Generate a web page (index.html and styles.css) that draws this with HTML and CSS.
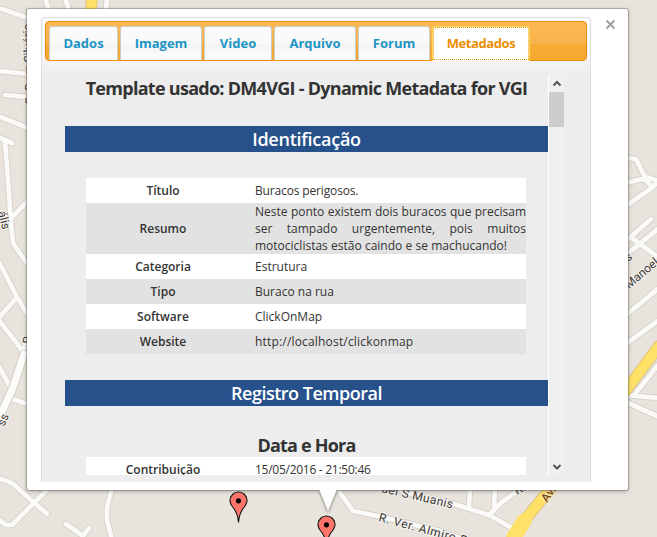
FILE: index.html
```html
<!DOCTYPE html>
<html lang="pt-BR">
<head>
<meta charset="utf-8">
<title>ClickOnMap</title>
<link rel="stylesheet" href="styles.css">
</head>
<body>
<svg class="map" width="657" height="537" viewBox="0 0 657 537">
  <defs>
    <g id="roads">
      <path d="M2 9L28 18M45-2L49 10M65-2L69 10M107-2L106 10M-2 71L28 74M5 95L28 97M-2 116L28 128M-2 137L12 143M5 141L8 180L11 223L13 243L28 265M11 218L28 201M-2 260L17 297L28 315M17 297L-2 319L22 350L22 362M27 340L22 357M-2 365L12 390M12 399L28 404"/>
      <path d="M-2 478L12 483L47 514M48 489L12 525L6 525L-2 519M66 524L83 536L89 528M83 536L80 540M112 488L107 507V520L112 540"/>
      <path d="M337 488L353 511L382 517L440 531L465 540M380 486L454 504L489 515L512 528M470 488L469 507M495 488L494 507M519 490L502 502L489 515"/>
      <path d="M626 158L636 159L645 177L659 181M626 206L653 187L645 180M659 180L653 187M626 183L646 178M626 241L651 219M626 255L659 228M632 238L659 258M626 315L659 288M626 344L659 320M659 364L634 395M626 395L659 398M626 402L659 417"/>
    </g>
  </defs>
  <rect width="657" height="537" fill="#e8e4dd"/>
  <use href="#roads" class="road-edge"/>
  <use href="#roads" class="road"/>
  <path class="wide-edge" d="M24 354L12 390L-2 420"/>
  <path class="wide" d="M24 354L12 390L-2 420"/>
  <path class="avenue-edge" d="M92-2L91 10M659 346L621 397M559 478L524 521L509 543"/>
  <path class="avenue" d="M92-2L91 10M659 346L621 397M559 478L524 521L509 543"/>
  <path class="avenue junction" d="M524 521L514 537"/>
  <g class="street">
    <text transform="translate(34 104) rotate(-92)">R. Dom Silvério</text>
    <text transform="translate(-2 212) rotate(76)">ális</text>
    <text transform="translate(4 427) rotate(-65)">ss</text>
    <text transform="translate(31 344) rotate(-85)">R.</text>
    <text transform="translate(381 492) rotate(13)" textLength="73">uel S Muanis</text>
    <text transform="translate(378 521) rotate(15)" textLength="93">R. Ver. Almiro P.</text>
    <text transform="translate(629 289) rotate(-40)">Manoel e</text>
    <text transform="translate(628 262) rotate(-35)">s</text>
    <text transform="translate(517 495) rotate(-30)">R.</text>
    <text class="street-main" transform="translate(547 503) rotate(-55)">Av.</text>
  </g>
</svg>

<section class="popup">
  <div class="panel">
    <nav class="tabs">
      <a class="tab dados">Dados</a>
      <a class="tab imagem">Imagem</a>
      <a class="tab video">Video</a>
      <a class="tab arquivo">Arquivo</a>
      <a class="tab forum">Forum</a>
      <a class="tab metadados">Metadados</a>
    </nav>
    <div class="scroller">
      <div class="content">
        <h1 class="title">Template usado: DM4VGI - Dynamic Metadata for VGI</h1>
        <h2 class="band ident">Identificação</h2>
        <dl class="rows">
          <div class="row"><dt>Título</dt><dd class="tight">Buracos perigosos.</dd></div>
          <div class="row tall"><dt>Resumo</dt><dd>Neste ponto existem dois buracos que precisam<br>ser tampado urgentemente, pois muitos<br>motociclistas estão caindo e se machucando!</dd></div>
          <div class="row"><dt>Categoria</dt><dd>Estrutura</dd></div>
          <div class="row"><dt>Tipo</dt><dd>Buraco na rua</dd></div>
          <div class="row"><dt>Software</dt><dd>ClickOnMap</dd></div>
          <div class="row"><dt>Website</dt><dd class="loose">http://localhost/clickonmap</dd></div>
        </dl>
        <h2 class="band registro">Registro Temporal</h2>
        <h3 class="subtitle">Data e Hora</h3>
        <dl class="rows second">
          <div class="row"><dt>Contribuição</dt><dd class="date">15/05/2016 - 21:50:46</dd></div>
        </dl>
      </div>
      <div class="scrollbar">
        <svg width="16" height="17" viewBox="0 0 16 17"><path d="M4.5 10.5L8 7L11.5 10.5"/></svg>
        <div class="thumb"></div>
        <svg class="down" width="16" height="17" viewBox="0 0 16 17"><path d="M4.5 7L8 10.5L11.5 7"/></svg>
      </div>
    </div>
  </div>
  <svg class="close" width="11" height="11" viewBox="0 0 11 11"><path d="M1.5 1.5L9.5 9.5M9.5 1.5L1.5 9.5"/></svg>
</section>

<svg class="markers" width="657" height="537" viewBox="0 0 657 537">
  <defs>
    <g id="pin">
      <path d="M0 31C-.5 24-1.5 21-5 16.5C-7.500 13.5-8.500 12-8.500 9A8.500 8.500 0 0 1 8.500 9C8.500 12 7.500 13.500 5 16.500C1.500 21 .5 24 0 31Z" fill="#fe7569" stroke="#111" stroke-width="1.100"/>
      <circle cy="9.300" r="2.600"/>
    </g>
  </defs>
  <path class="tail" d="M319 489L328 511L337 489Z"/>
  <use href="#pin" x="238.500" y="491.500"/>
  <use href="#pin" x="326.500" y="515.500"/>
</svg>
</body>
</html>
```
FILE: styles.css
```css
* { box-sizing: border-box; }
body {
  margin: 0;
  width: 657px;
  height: 537px;
  overflow: hidden;
  position: relative;
  font-family: "Open Sans", "Noto Sans", sans-serif;
  color: #333;
}
.map, .markers { position: absolute; left: 0; top: 0; }
.map path, .map use { fill: none; stroke-linecap: round; stroke-linejoin: round; }
.road-edge { stroke: #d6d0c6; stroke-width: 6.5; }
.road { stroke: #fafaf8; stroke-width: 4.7; }
.wide-edge { stroke: #d6d0c6; stroke-width: 9; }
.wide { stroke: #fcfcfa; stroke-width: 7; }
.avenue-edge { stroke: #dcc486; stroke-width: 12; }
.avenue { stroke: #ffe168; stroke-width: 10; }
.junction { stroke-width: 15; }
.street {
  font: 12px Roboto, sans-serif;
  fill: #3c3835;
  stroke: #f4f2ee;
  stroke-width: 2px;
  paint-order: stroke;
}
.street-main { fill: #7a4a16; stroke: #fff0b0; font-weight: 500; }

.popup {
  position: absolute;
  left: 27px;
  top: 9px;
  width: 601px;
  height: 481px;
  padding: 8px 0 0 14px;
  background: #fff;
  border-radius: 2px;
  box-shadow: 0 0 0 1px rgba(90, 85, 75, .32), 0 1px 4px rgba(0, 0, 0, .35);
}
.panel {
  width: 550px;
  height: 465px;
  padding: 3px;
  border: 1px solid #ddd;
  border-bottom: 0;
  border-radius: 4px 4px 0 0;
  background: linear-gradient(#fbfbfb 0, #f8f8f8 35px, #ededed 58px);
}
.tabs {
  display: flex;
  width: 542px;
  height: 40px;
  padding: 4px 0 0 3px;
  border: 1px solid #e78f08;
  border-radius: 4px;
  background: linear-gradient(#fbb850 0, #f8b44c 55%, #f6ab34 60%, #f6a931 100%);
}
.tab {
  height: 34px;
  margin-right: 2px;
  border: 1px solid #ccc;
  border-bottom: 0;
  border-radius: 3px 3px 0 0;
  background: linear-gradient(#fafafa 50%, #f4f4f4 51%, #fdfdfd);
  color: #1c94c4;
  font-size: 13px;
  font-weight: 700;
  line-height: 33px;
  text-align: center;
}
.dados { width: 69px; }
.imagem { width: 82px; }
.video { width: 68px; }
.arquivo { width: 82px; }
.forum { width: 72px; }
.metadados {
  width: 98px;
  height: 35px;
  border-color: #fbd850;
  background: #fff;
  color: #eb8f00;
  letter-spacing: -.4px;
  outline: 1px dotted #eb8f00;
  outline-offset: -2px;
}
.scroller { display: flex; height: 400px; margin: 14px 0 0 20px; overflow: hidden; }
.content { width: 483px; overflow: hidden; }
h1, h2, h3, dl, dd { margin: 0; }
.title, .subtitle { font-size: 18px; font-weight: 700; line-height: 26px; height: 26px; text-align: center; white-space: nowrap; }
.title { letter-spacing: -.72px; }
.band {
  height: 26px;
  background: #27518b;
  color: #fff;
  font-size: 18px;
  font-weight: 600;
  line-height: 27px;
  text-align: center;
}
.ident { margin-top: 25px; letter-spacing: -.25px; }
.registro { letter-spacing: -.5px; }
.rows { width: 440px; margin: 26px 0 26px 21px; }
.row {
  display: flex;
  align-items: center;
  height: 25px;
  background: #fff;
  font-size: 12px;
  line-height: 17px;
}
.row:nth-child(even) { background: #e2e2e2; }
.tall { height: 51px; }
dt { width: 154px; font-weight: 600; text-align: center; }
dd { width: 271px; margin-left: 15px; white-space: nowrap; }
.tight { letter-spacing: -.15px; }
.loose { letter-spacing: .18px; }
.date { letter-spacing: -.27px; }
.tall dd { white-space: normal; text-align: justify; text-align-last: justify; }
.tall dd::after { content: ""; display: inline-block; width: 19px; }
.subtitle { margin-top: 26px; letter-spacing: -.8px; }
.second { margin-top: -1px; }
.scrollbar { width: 17px; border-left: 1px solid #fff; background: #f0f0f0; display: flex; flex-direction: column; }
.scrollbar path { fill: none; stroke: #555; stroke-width: 2; }
.thumb { width: 15px; height: 35px; background: #cdcdcd; }
.down { margin-top: auto; }
.close { position: absolute; left: 578px; top: 10px; }
.close path { stroke: #a0a0a0; stroke-width: 2; }
.tail { fill: #fff; filter: drop-shadow(0 2px 1.5px rgba(0, 0, 0, .4)); }
```
